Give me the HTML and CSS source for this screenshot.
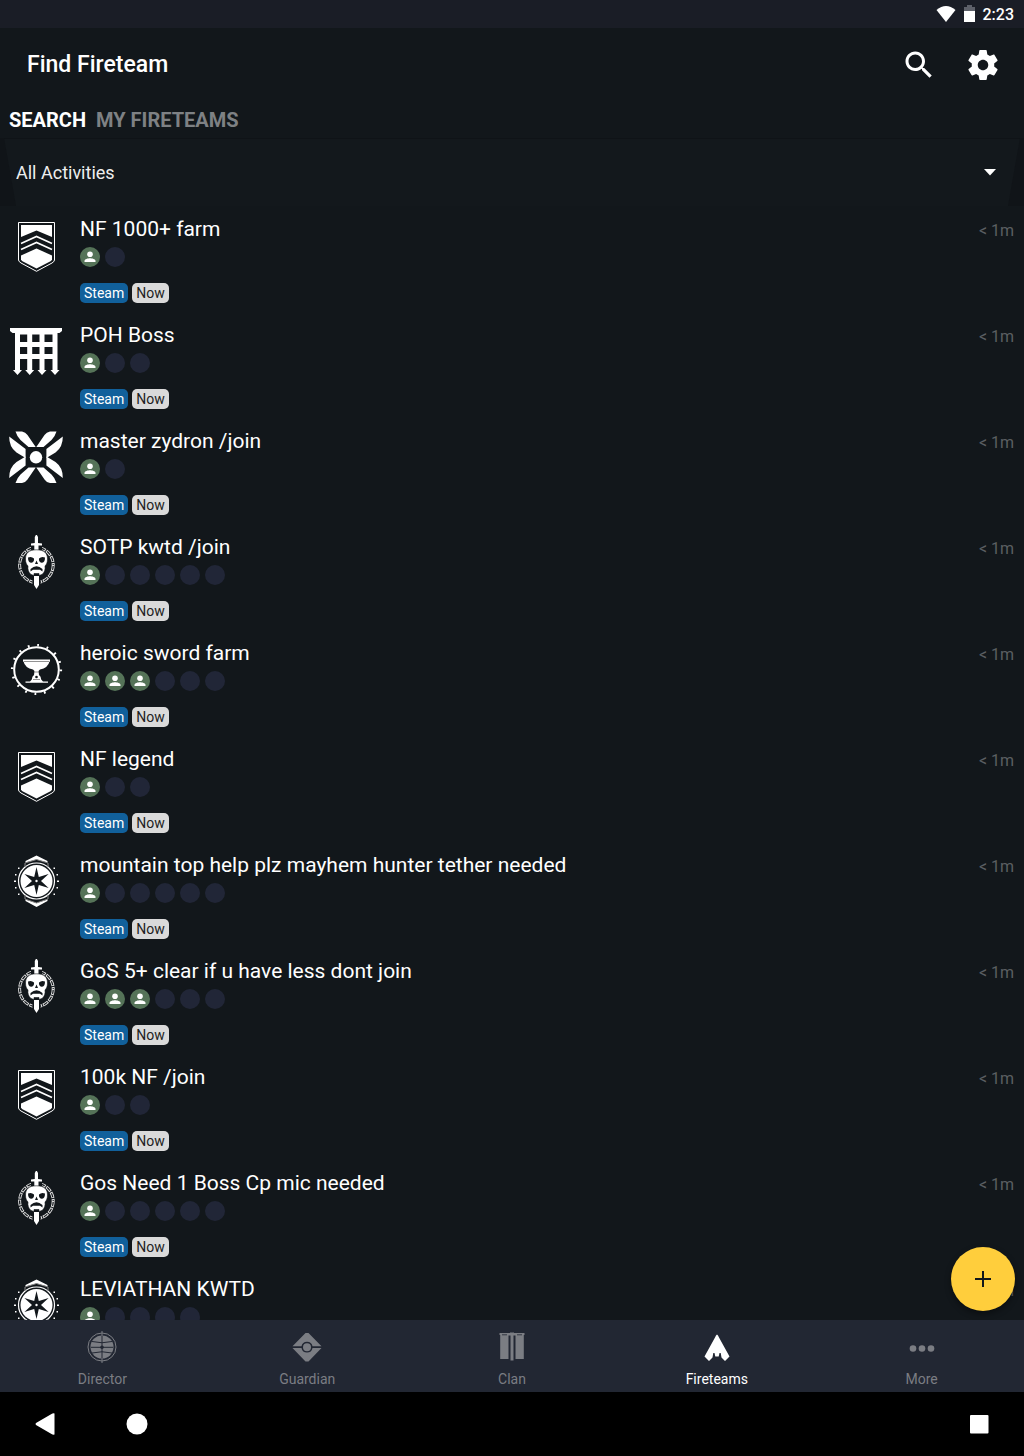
FILE: index.html
```html
<!DOCTYPE html>
<html lang="en">
<head>
<meta charset="utf-8">
<meta name="viewport" content="width=device-width, initial-scale=1">
<title>Find Fireteam</title>
<link rel="stylesheet" href="styles.css">
</head>
<body>
<svg class="sprite" aria-hidden="true">
  <symbol id="nightfall" viewBox="0 0 56 56">
    <path d="M10.500 5.500H46.500V43Q46 45 44 46L28.500 54.300 13 46Q11 45 10.500 43Z" fill="none" stroke="#fff"/>
    <path d="M13 8H44V20L28.500 13.500 13 20Z"/>
    <path d="M13 26.500 28.500 19.500 44 26.500M13 32.500 28.500 25.500 44 32.500" fill="none" stroke="#fff" stroke-width="1.600"/>
    <path d="M13 38.500 28.500 31.500 44 38.500V42.500L43 44 28.500 51.500 14 44 13 42.500Z"/>
  </symbol>
  <symbol id="gate" viewBox="0 0 56 56">
    <path d="M2 5H54V8L51.500 10H49.500V47H51.500L47 52 42.500 47H44.500V36H36.500V47H38.500L34 52 29.500 47H31.500V36H24.200V47H26.200L21.700 52 17.200 47H19.200V36H12V47H14L9.500 52 5 47H7V10H4.500L2 8ZM12 11.500V19H19.200V11.500ZM24.200 11.500V19H31.500V11.500ZM36.500 11.500V19H44.500V11.500ZM12 24V31H19.200V24ZM24.200 24V31H31.500V24ZM36.500 24V31H44.500V24Z" fill-rule="evenodd"/>
  </symbol>
  <symbol id="vex" viewBox="0 0 56 56">
    <g id="vex-top">
      <path id="vex-petals" d="M7.500 2.500H14Q17.500 3 19.500 6L27.700 18H20.500L12.500 11Q9 7.500 7.500 2.500ZM1.200 7.500 17.600 20V29L8.500 23.500Q1 18 1.200 7.500Z"/>
      <use href="#vex-petals" transform="matrix(-1 0 0 1 56 0)"/>
    </g>
    <use href="#vex-top" transform="matrix(1 0 0 -1 0 56.600)"/>
    <path d="M18 18.500H38V38H18Z" fill="#12171b"/>
    <circle cx="28" cy="28.300" r="6.200"/>
  </symbol>
  <symbol id="raid" viewBox="0 0 56 56">
    <ellipse cx="28.400" cy="30" rx="16.800" ry="17.500" fill="none" stroke="#ddd" stroke-width="3" stroke-dasharray="6 1"/>
    <ellipse cx="28.400" cy="30" rx="16.800" ry="17.500" fill="none" stroke="#12171b" stroke-width="1.200" stroke-dasharray="4 3" stroke-dashoffset="-1"/>
    <path d="M23 8.500H34V37H23Z" fill="#12171b"/>
    <path d="M28.400-1 30 2V8L34 8.500V10.500H30.500V16H26.300V10.500H23V8.500L26.800 8V2Z"/>
    <path d="M24.500 40.500H32.500V54H24.500Z" fill="#12171b"/>
    <path d="M26 41H31V50L28.500 54 26 50Z"/>
    <path d="M28.400 14.800C21 14.800 17.500 18 17.500 24 17.500 27.500 18.500 29.500 20 31 19.500 34.500 20.500 37.500 23 39.500L26 40.500V38.500H31V40.500L34 39.500C36.500 37.500 37.500 34.500 37 31 38.500 29.500 39.500 27.500 39.500 24 39.500 18 36 14.800 28.400 14.800Z" stroke="#12171b" stroke-width=".6"/>
    <path d="M20 22.500Q23.500 21 26 23.500 26.500 27 23.500 27.800 20 27.800 20 22.500ZM37 22.500Q33.500 21 31 23.500 30.500 27 33.500 27.800 37 27.800 37 22.500ZM28.500 25.500 30 29H27ZM22.500 34Q28.500 28.500 34.500 34V36.500L32 34.800H25L22.500 36.500Z" fill="#12171b"/>
  </symbol>
  <symbol id="menagerie" viewBox="0 0 56 56">
    <circle cx="28.500" cy="28.500" r="24.300" fill="none" stroke="#fff" stroke-width="2.600" stroke-dasharray="1.800 7.743"/>
    <circle cx="28.500" cy="28.500" r="22.300" fill="none" stroke="#fff" stroke-width="2"/>
    <path d="M15 18.500H42V20.500H41.500Q40 27 32 28.500L30.500 30 31 34Q33 35 33.200 38.500L35 40.500H40V41.800H17.500V40.500H22L23.800 38.500Q24 35 26 34L26.500 30 25 28.500Q17 27 15.500 20.500H15Z"/>
    <path d="M16 20.500H41M26 31H31M25 38.500H32" fill="none" stroke="#777" stroke-width=".8"/>
    <circle cx="28.500" cy="36" r="1.300" fill="#12171b"/>
  </symbol>
  <symbol id="compass" viewBox="0 0 56 56">
    <circle cx="28.500" cy="28" r="18" fill="none" stroke="#fff" stroke-width="1.200"/>
    <circle cx="28.500" cy="28" r="16"/>
    <path d="M17.500 8 28.500 2.500 39.500 8V9.500L28.500 6.500 17.500 9.500ZM17.500 48 28.500 54 39.500 48V46.500L28.500 50 17.500 46.500Z"/>
    <path d="M17 14V10L28.500 6.500 40 10V14M17 42V46L28.500 50 40 46V42" fill="none" stroke="#888"/>
    <path d="M28.500 14 30.800 24 40.600 21 33 28 40.600 35 30.800 32 28.500 42 26.200 32 16.400 35 24 28 16.400 21 26.200 24Z" fill="#12171b"/>
    <circle cx="28.500" cy="28" r="1.200"/>
    <path d="M10 14.500h1.500v1.500H10ZM7 21h1.500v1.500H7ZM6 27.500h2v1.500H6ZM7 34h1.500v1.500H7ZM10 40.500h1.500V42H10ZM45.500 14.500H47v1.500h-1.500ZM48.500 21H50v1.500h-1.500ZM49 27.500h2v1.500h-2ZM48.500 34H50v1.500h-1.500ZM45.500 40.500H47V42h-1.500Z"/>
  </symbol>
  <symbol id="person" viewBox="0 0 20 20">
    <circle cx="10" cy="7.300" r="2.800"/>
    <path d="M4.500 15V14C4.500 12 8 11.200 10 11.200S15.500 12 15.500 14V15Z"/>
  </symbol>
</svg>

<div class="app">
  <div class="status-bar">
    <svg width="20" height="18" viewBox="0 0 20 18" fill="#fff" aria-hidden="true"><path d="M.500 5Q10-3 19.500 5L10 17Z"/></svg>
    <svg class="battery" width="11" height="18" viewBox="0 0 11 18" aria-hidden="true"><path d="M0 2H3V0H8V2H11V6H0Z" fill="#5d6069"/><path d="M0 6H11V17H0Z" fill="#fff"/></svg>
    <time>2:23</time>
  </div>

  <header class="app-header">
    <h1>Find Fireteam</h1>
    <button class="icon-button" type="button" aria-label="Search"><svg viewBox="0 0 24 24"><path d="M15.500 14h-.79l-.28-.27C15.410 12.590 16 11.110 16 9.500 16 5.910 13.090 3 9.500 3S3 5.910 3 9.500 5.910 16 9.500 16c1.610 0 3.090-.59 4.230-1.570l.27.28v.79l5 4.990L20.490 19l-4.990-5zm-6 0C7.010 14 5 11.990 5 9.500S7.010 5 9.500 5 14 7.010 14 9.500 11.990 14 9.500 14z"/></svg></button>
    <button class="icon-button" type="button" aria-label="Settings"><svg viewBox="0 0 24 24"><path d="M19.430 12.980c.04-.32.07-.64.07-.98s-.03-.66-.07-.98l2.110-1.650c.19-.15.24-.42.12-.64l-2-3.460c-.12-.22-.39-.3-.61-.22l-2.490 1c-.52-.4-1.080-.73-1.690-.98l-.38-2.650C14.460 2.180 14.250 2 14 2h-4c-.25 0-.46.18-.49.42l-.38 2.650c-.61.25-1.170.59-1.690.98l-2.490-1c-.23-.09-.49 0-.61.22l-2 3.460c-.13.22-.07.49.12.64l2.110 1.650c-.04.32-.07.65-.07.98s.03.66.07.98l-2.110 1.650c-.19.15-.24.42-.12.64l2 3.460c.12.22.39.3.61.22l2.490-1c.52.4 1.080.73 1.690.98l.38 2.650c.03.24.24.42.49.42h4c.25 0 .46-.18.49-.42l.38-2.650c.61-.25 1.170-.59 1.690-.98l2.490 1c.23.09.49 0 .61-.22l2-3.460c.12-.22.07-.49-.12-.64l-2.110-1.650zM12 15.500c-1.930 0-3.500-1.570-3.500-3.500s1.570-3.500 3.500-3.500 3.500 1.570 3.500 3.500-1.570 3.500-3.500 3.500z"/></svg></button>
  </header>

  <div class="tabs" role="tablist">
    <button class="tab is-active" type="button" role="tab" aria-selected="true">SEARCH</button>
    <button class="tab" type="button" role="tab" aria-selected="false">MY FIRETEAMS</button>
  </div>

  <div class="filter">
    <div class="filter-field">
      <select aria-label="Activity"><option>All Activities</option></select>
      <svg width="12" height="7" viewBox="0 0 12 7" fill="#fff" aria-hidden="true"><path d="M0 0H12L6 6.500Z"/></svg>
    </div>
  </div>

  <main class="results">
    <ul class="list">
      <li class="row">
        <svg class="emblem"><use href="#nightfall"/></svg>
        <div class="info"><h2>NF 1000+ farm</h2>
          <div class="slots"><span class="slot filled"><svg><use href="#person"/></svg></span><span class="slot"></span></div>
          <div class="tags"><span class="tag steam">Steam</span><span class="tag">Now</span></div></div>
        <span class="age">&lt; 1m</span>
      </li>
      <li class="row">
        <svg class="emblem"><use href="#gate"/></svg>
        <div class="info"><h2>POH Boss</h2>
          <div class="slots"><span class="slot filled"><svg><use href="#person"/></svg></span><span class="slot"></span><span class="slot"></span></div>
          <div class="tags"><span class="tag steam">Steam</span><span class="tag">Now</span></div></div>
        <span class="age">&lt; 1m</span>
      </li>
      <li class="row">
        <svg class="emblem"><use href="#vex"/></svg>
        <div class="info"><h2>master zydron /join</h2>
          <div class="slots"><span class="slot filled"><svg><use href="#person"/></svg></span><span class="slot"></span></div>
          <div class="tags"><span class="tag steam">Steam</span><span class="tag">Now</span></div></div>
        <span class="age">&lt; 1m</span>
      </li>
      <li class="row">
        <svg class="emblem"><use href="#raid"/></svg>
        <div class="info"><h2>SOTP kwtd /join</h2>
          <div class="slots"><span class="slot filled"><svg><use href="#person"/></svg></span><span class="slot"></span><span class="slot"></span><span class="slot"></span><span class="slot"></span><span class="slot"></span></div>
          <div class="tags"><span class="tag steam">Steam</span><span class="tag">Now</span></div></div>
        <span class="age">&lt; 1m</span>
      </li>
      <li class="row">
        <svg class="emblem"><use href="#menagerie"/></svg>
        <div class="info"><h2>heroic sword farm</h2>
          <div class="slots"><span class="slot filled"><svg><use href="#person"/></svg></span><span class="slot filled"><svg><use href="#person"/></svg></span><span class="slot filled"><svg><use href="#person"/></svg></span><span class="slot"></span><span class="slot"></span><span class="slot"></span></div>
          <div class="tags"><span class="tag steam">Steam</span><span class="tag">Now</span></div></div>
        <span class="age">&lt; 1m</span>
      </li>
      <li class="row">
        <svg class="emblem"><use href="#nightfall"/></svg>
        <div class="info"><h2>NF legend</h2>
          <div class="slots"><span class="slot filled"><svg><use href="#person"/></svg></span><span class="slot"></span><span class="slot"></span></div>
          <div class="tags"><span class="tag steam">Steam</span><span class="tag">Now</span></div></div>
        <span class="age">&lt; 1m</span>
      </li>
      <li class="row">
        <svg class="emblem"><use href="#compass"/></svg>
        <div class="info"><h2>mountain top help plz mayhem hunter tether needed</h2>
          <div class="slots"><span class="slot filled"><svg><use href="#person"/></svg></span><span class="slot"></span><span class="slot"></span><span class="slot"></span><span class="slot"></span><span class="slot"></span></div>
          <div class="tags"><span class="tag steam">Steam</span><span class="tag">Now</span></div></div>
        <span class="age">&lt; 1m</span>
      </li>
      <li class="row">
        <svg class="emblem"><use href="#raid"/></svg>
        <div class="info"><h2>GoS 5+ clear if u have less dont join</h2>
          <div class="slots"><span class="slot filled"><svg><use href="#person"/></svg></span><span class="slot filled"><svg><use href="#person"/></svg></span><span class="slot filled"><svg><use href="#person"/></svg></span><span class="slot"></span><span class="slot"></span><span class="slot"></span></div>
          <div class="tags"><span class="tag steam">Steam</span><span class="tag">Now</span></div></div>
        <span class="age">&lt; 1m</span>
      </li>
      <li class="row">
        <svg class="emblem"><use href="#nightfall"/></svg>
        <div class="info"><h2>100k NF /join</h2>
          <div class="slots"><span class="slot filled"><svg><use href="#person"/></svg></span><span class="slot"></span><span class="slot"></span></div>
          <div class="tags"><span class="tag steam">Steam</span><span class="tag">Now</span></div></div>
        <span class="age">&lt; 1m</span>
      </li>
      <li class="row">
        <svg class="emblem"><use href="#raid"/></svg>
        <div class="info"><h2>Gos Need 1 Boss Cp mic needed</h2>
          <div class="slots"><span class="slot filled"><svg><use href="#person"/></svg></span><span class="slot"></span><span class="slot"></span><span class="slot"></span><span class="slot"></span><span class="slot"></span></div>
          <div class="tags"><span class="tag steam">Steam</span><span class="tag">Now</span></div></div>
        <span class="age">&lt; 1m</span>
      </li>
      <li class="row">
        <svg class="emblem"><use href="#compass"/></svg>
        <div class="info"><h2>LEVIATHAN KWTD</h2>
          <div class="slots"><span class="slot filled"><svg><use href="#person"/></svg></span><span class="slot"></span><span class="slot"></span><span class="slot"></span><span class="slot"></span></div></div>
        <span class="age">&lt; 1m</span>
      </li>
    </ul>
    <button class="fab" type="button" aria-label="Create fireteam"><svg width="18" height="18" viewBox="0 0 18 18"><path d="M8 1H10V8H17V10H10V17H8V10H1V8H8Z" fill="#12171b"/></svg></button>
  </main>

  <nav class="bottom-nav">
    <a href="#director"><svg viewBox="0 0 32 32">
      <circle cx="16" cy="16" r="14" fill="none" stroke="currentColor" stroke-width="1"/>
      <circle cx="16" cy="16" r="11.500"/>
      <path d="M16 4V28M6 10.500Q16 13 26 10.500M5 16.300H27M6 22Q16 19.500 26 22" fill="none" stroke="#222733" stroke-width="1"/>
      <path d="M16 0V5M16 27V32" stroke="currentColor"/><circle cx="16" cy="16.300" r="1.800" fill="#222733"/></svg>Director</a>
    <a href="#guardian"><svg viewBox="0 0 32 32">
      <path d="M14.500 2H17.500L30.500 15.300H21.500A5.600 5.600 0 0 0 10.500 15.300H1.500ZM1.500 17H10.500A5.600 5.600 0 0 0 21.500 17H30.500L17.500 30.500H14.500Z"/><circle cx="16" cy="16.200" r="4"/></svg>Guardian</a>
    <a href="#clan"><svg viewBox="0 0 32 32">
      <path d="M3.500 2H14V1.500H18V2H28.500V4H27.800V28H19.500V4.500H17.500V29.500H14.500V4.500H12.500V28H4.200V4H3.500Z"/><path d="M6 3.800H11M21 3.800H26" stroke="#222733" stroke-width=".8"/></svg>Clan</a>
    <a class="is-active" href="#fireteams" aria-current="page"><svg viewBox="0 0 32 32">
      <path d="M16 3.500Q17 4 18 6.500L28.500 25.500 24 30 20.500 26.500 19.700 22H18.500L17.700 25.500H14.300L13.500 22H12.300L11.500 26.500 8 30 3.500 25.500 14 6.500Q15 4 16 3.500Z"/></svg>Fireteams</a>
    <a href="#more"><svg viewBox="0 0 32 32"><circle cx="7" cy="17.500" r="3.300"/><circle cx="16" cy="17.500" r="3.300"/><circle cx="25" cy="17.500" r="3.300"/></svg>More</a>
  </nav>

  <div class="system-nav">
    <button type="button" aria-label="Back"><svg viewBox="0 0 24 24"><path d="M21.500 1.500V22.500Q20 23 18.500 22L3 13Q2 12 3 11L18.500 2Q20 1 21.500 1.500Z"/></svg></button>
    <button type="button" aria-label="Home"><svg viewBox="0 0 24 24"><circle cx="12" cy="12" r="10.500"/></svg></button>
    <button class="overview" type="button" aria-label="Overview"><svg viewBox="0 0 24 24"><rect x="3" y="3" width="18.500" height="18.500" rx="1"/></svg></button>
  </div>
</div>
</body>
</html>
```
FILE: styles.css
```css
* {
  box-sizing: border-box;
}

body {
  margin: 0;
  background: #12171b;
  color: #fff;
  font-family: Roboto, "Liberation Sans", sans-serif;
}

button {
  margin: 0;
  padding: 0;
  border: 0;
  background: none;
  color: inherit;
  font: inherit;
}

h1,
h2,
ul {
  margin: 0;
  padding: 0;
}

svg {
  display: block;
}

.sprite {
  position: absolute;
  width: 0;
  height: 0;
}

.app {
  display: flex;
  flex-direction: column;
  height: 100vh;
}

/* Status bar */
.status-bar {
  display: flex;
  flex: none;
  align-items: center;
  justify-content: flex-end;
  gap: 8px;
  height: 28px;
  padding-right: 10px;
  background: #1a1d26;
  font-size: 16px;
  font-weight: 500;
}

/* Header */
.app-header {
  display: flex;
  flex: none;
  align-items: center;
  gap: 28px;
  height: 73px;
  padding: 0 23px 0 27px;
}

.app-header h1 {
  flex: 1;
  font-size: 23px;
  font-weight: 500;
}

.icon-button svg {
  width: 36px;
  height: 36px;
  fill: #fff;
}

.tabs {
  display: flex;
  flex: none;
  gap: 10px;
  height: 37px;
  padding: 0 9px;
}

.tab {
  color: #7e8184;
  font-size: 20px;
  font-weight: 700;
}

.tab.is-active {
  color: #fff;
}

/* Activity filter */
.filter {
  flex: none;
  margin-bottom: 3px;
  background: #101418;
}

.filter-field {
  display: flex;
  align-items: center;
  height: 68px;
  padding: 0 28px 0 16px;
  border-top: 1px solid #0f1317;
  background: #13181c;
  clip-path: polygon(4px 0, calc(100% - 4px) 0, calc(100% - 16px) 100%, 16px 100%);
}

.filter select {
  flex: 1;
  height: 100%;
  padding: 0;
  border: 0;
  background: none;
  color: #eee;
  font: 18px Roboto, "Liberation Sans", sans-serif;
  appearance: none;
}

/* Fireteam list */
.results {
  position: relative;
  flex: 1;
  min-height: 0;
  overflow: hidden;
}

.list {
  list-style: none;
}

.row {
  display: flex;
  gap: 16px;
  height: 106px;
  padding: 8px 10px 0 8px;
}

.emblem {
  flex: none;
  width: 56px;
  height: 56px;
  fill: #fff;
  overflow: visible;
}

.info {
  flex: 1;
  min-width: 0;
}

.info h2 {
  font-size: 21px;
  font-weight: 400;
  line-height: 24px;
}

.slots {
  display: flex;
  gap: 5px;
  margin-top: 6px;
}

.slot {
  width: 20px;
  height: 20px;
  border-radius: 50%;
  background: #212637;
}

.slot.filled {
  background: #557358;
}

.slot svg {
  width: 20px;
  height: 20px;
  fill: #fff;
}

.tags {
  display: flex;
  gap: 4px;
  margin-top: 16px;
}

.tag {
  padding: 0 4px;
  border-radius: 5px;
  background: #dadada;
  color: #222;
  font-size: 14px;
  line-height: 20px;
}

.tag.steam {
  background: #11609b;
  color: #fff;
}

.age {
  color: #5b5f62;
  font-size: 16px;
  line-height: 28px;
}

.fab {
  position: absolute;
  right: 9px;
  bottom: 9px;
  display: flex;
  align-items: center;
  justify-content: center;
  width: 64px;
  height: 64px;
  border-radius: 50%;
  background: #ffce3c;
  box-shadow: 0 3px 6px rgba(0, 0, 0, 0.4);
}

/* Bottom navigation */
.bottom-nav {
  display: grid;
  flex: none;
  grid-template-columns: repeat(5, 1fr);
  height: 72px;
  background: #222733;
}

.bottom-nav a {
  display: flex;
  flex-direction: column;
  align-items: center;
  gap: 8px;
  padding-top: 11px;
  color: #7b7d83;
  font-size: 14px;
  line-height: 16px;
  text-decoration: none;
}

.bottom-nav a.is-active {
  color: #fff;
}

.bottom-nav svg {
  width: 32px;
  height: 32px;
  fill: currentColor;
}

/* System navigation */
.system-nav {
  display: flex;
  flex: none;
  align-items: center;
  gap: 68px;
  height: 64px;
  padding: 0 33px;
  background: #000;
}

.system-nav svg {
  width: 24px;
  height: 24px;
  fill: #fff;
}

.system-nav .overview {
  margin-left: auto;
}
```
